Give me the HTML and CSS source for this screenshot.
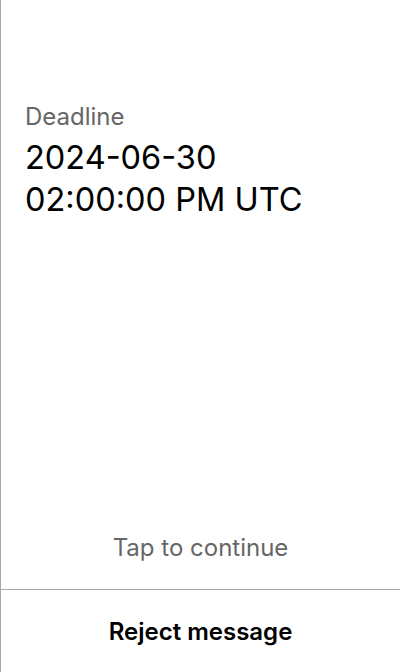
FILE: index.html
```html
<!DOCTYPE html>
<html>
<head>
<meta charset="utf-8">
<link rel="stylesheet" href="styles.css">
</head>
<body>
<div class="screen">
  <div class="content">
    <div class="label">Deadline</div>
    <div class="value">2024-06-30<br>02:00:00 PM UTC</div>
  </div>
  <div class="hint">Tap to continue</div>
  <div class="footer">
    <button class="reject">Reject message</button>
  </div>
</div>
</body>
</html>
```

FILE: styles.css
```css
html, body {
  margin: 0;
  padding: 0;
  background: #fff;
}
body {
  font-family: Inter, "Noto Sans", sans-serif;
}
.screen {
  width: 400px;
  height: 672px;
  box-sizing: border-box;
  border-left: 1px solid #a8a8a8;
  display: flex;
  flex-direction: column;
}
.content {
  flex: 1;
  padding: 101px 24px 0 24px;
}
.label {
  font-size: 24px;
  line-height: 32px;
  color: #666;
}
.value {
  margin-top: 4px;
  font-size: 32.5px;
  line-height: 42px;
  color: #000;
}
.hint {
  text-align: center;
  font-size: 24px;
  line-height: 32px;
  color: #666;
  padding-bottom: 25px;
}
.footer {
  border-top: 1px solid #a8a8a8;
  height: 83px;
  box-sizing: border-box;
  padding-top: 1px;
  display: flex;
  align-items: center;
  justify-content: center;
}
.reject {
  background: none;
  border: none;
  font-family: inherit;
  font-size: 24px;
  line-height: 32px;
  font-weight: 600;
  color: #000;
  padding: 0;
}
```
